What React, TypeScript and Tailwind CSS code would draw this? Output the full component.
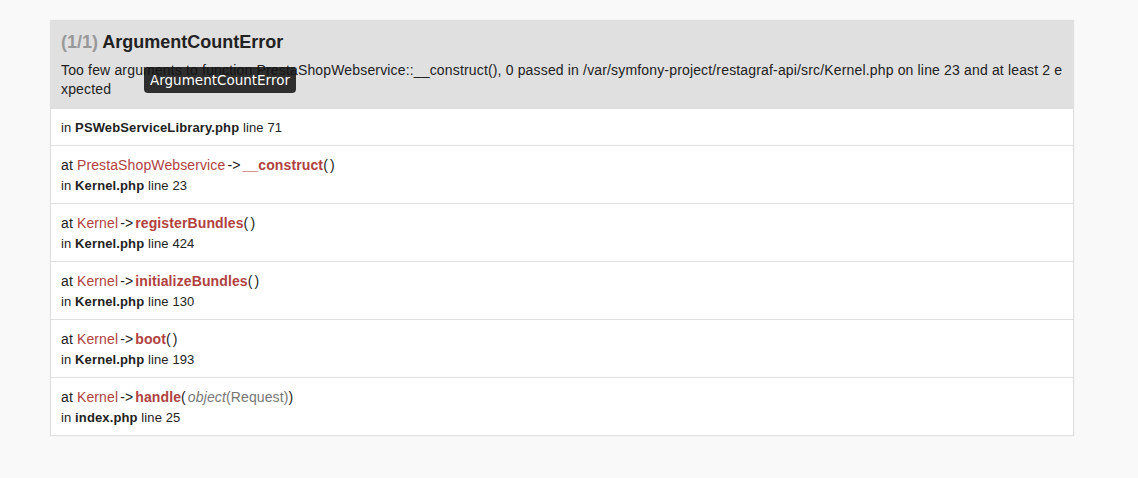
const frames = [
  { cls: 'PrestaShopWebservice', method: '__construct', args: null, file: 'Kernel.php', line: 23 },
  { cls: 'Kernel', method: 'registerBundles', args: null, file: 'Kernel.php', line: 424 },
  { cls: 'Kernel', method: 'initializeBundles', args: null, file: 'Kernel.php', line: 130 },
  { cls: 'Kernel', method: 'boot', args: null, file: 'Kernel.php', line: 193 },
  { cls: 'Kernel', method: 'handle', args: 'Request', file: 'index.php', line: 25 },
];

export default function App() {
  return (
    <div
      className="min-h-[478px] bg-[#f9f9f9] pt-5 text-[#222]"
      style={{ fontFamily: '"Liberation Sans", Arial, sans-serif' }}
    >
      <div className="relative ml-[50px] w-[1024px] border border-[#e0e0e0] bg-white shadow-[0_0_1px_rgba(128,128,128,0.2)]">
        <div className="bg-[#e0e0e0] p-[10px]">
          <h2 className="m-0 text-[18px] font-bold leading-[1.3] text-[#222]">
            <span className="text-[#999]">(1/1)</span> ArgumentCountError
          </h2>
          <p className="mt-[7px] break-all text-[14px] leading-[19px] tracking-[0.16px]">
            Too few arguments to function PrestaShopWebservice::__construct(), 0 passed in
            /var/symfony-project/restagraf-api/src/Kernel.php on line 23 and at least 2 expected
          </p>
        </div>

        <div className="px-[10px] pt-[10px] pb-[8px] text-[13px] leading-[18px] tracking-[0.12px]">
          in <b>PSWebServiceLibrary.php</b> line 71
        </div>

        {frames.map((f) => (
          <div key={f.method} className="border-t border-[#e0e0e0] px-[10px] pt-[10px] pb-[8px] tracking-[0.12px]">
            <div className="text-[14px] leading-[18px]">
              at <span className="text-[#b0413e]">{f.cls}</span>
              <span className="px-[2px]">-&gt;</span>
              <span className="font-bold text-[#b0413e]">{f.method}</span>
              (
              <span className="inline-block pl-[2px] text-[#777]">
                {f.args && (
                  <>
                    <em>object</em>({f.args})
                  </>
                )}
              </span>
              )
            </div>
            <div className="mt-[3px] text-[13px] leading-[18px]">
              in <b>{f.file}</b> line {f.line}
            </div>
          </div>
        ))}

        <div
          className="absolute left-[93px] top-[46px] flex h-[26px] items-center rounded-[4px] bg-[rgba(20,20,20,0.88)] px-[6px] text-[13.5px] text-white"
          style={{ fontFamily: '"DejaVu Sans", sans-serif' }}
        >
          ArgumentCountError
        </div>
      </div>
    </div>
  );
}
